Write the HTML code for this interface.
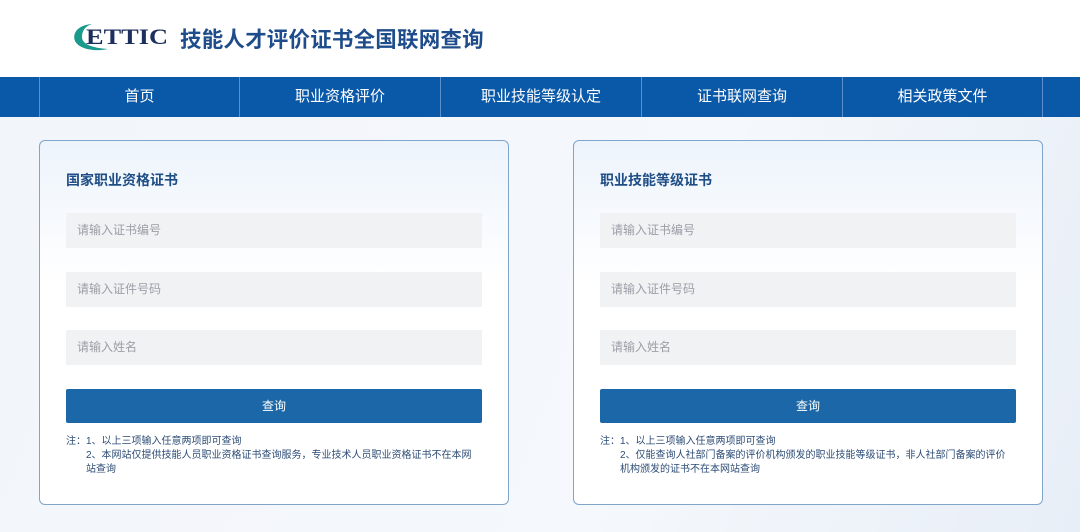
<!DOCTYPE html>
<html><head><meta charset="utf-8"><style>
*{margin:0;padding:0;box-sizing:border-box}
body{width:1080px;height:532px;overflow:hidden;background:#fff;font-family:"Liberation Sans","Noto Sans CJK SC",sans-serif;position:relative}
.hdr{height:77px;position:relative}
.logo{position:absolute;left:72px;top:20px}
.site{position:absolute;left:180px;top:23px;font-size:21.5px;font-weight:bold;color:#1f4d8c;letter-spacing:0.2px}
.nav{position:absolute;top:77px;left:0;width:1080px;height:40px;background:#0a58a8}
.nav div{position:absolute;top:0;height:40px;line-height:40px;text-align:center;color:#fff;font-size:15px;border-left:1px solid #5b8fcb}
.main{position:absolute;top:117px;left:0;width:1080px;height:415px;background:linear-gradient(110deg,#f2f5fa 0%,#f5f8fc 60%,#e8eef7 100%)}
.card{position:absolute;top:140px;width:470px;height:365px;border:1px solid #7fa5ca;border-radius:6px;background:linear-gradient(180deg,#edf4fc 0%,#fff 40%,#fff 100%)}
.card h3{position:absolute;left:26px;top:29px;font-size:14px;color:#1f4d85;font-weight:bold}
.inp{position:absolute;left:26px;width:416px;height:35px;background:#f1f2f4;color:#9a9ea6;font-size:12px;line-height:35px;padding-left:11px}
.btn{position:absolute;left:26px;top:248px;width:416px;height:34px;background:#1b67a7;border-radius:2px;color:#fff;font-size:12px;text-align:center;line-height:34px}
.note{position:absolute;left:26px;top:294px;font-size:10px;line-height:14px;color:#2d4c76;width:412px}
.note p{padding-left:20px}
</style></head><body>
<div class="hdr">
<svg class="logo" width="100" height="36" viewBox="0 0 100 36">
<path d="M20 4 C6 5 0 13 3 21 C7 29 22 32 36 29 C20 28 10 24 10 17 C10 10 14 6 20 4Z" fill="#1a9a8c"/>
<text x="14" y="24" font-family="Liberation Serif" font-weight="bold" font-size="22" fill="#1c2f5e" textLength="82" lengthAdjust="spacingAndGlyphs">ETTIC</text>
</svg>
<div class="site">技能人才评价证书全国联网查询</div>
</div>
<div class="nav">
<div style="left:39px;width:200px">首页</div>
<div style="left:239px;width:201px">职业资格评价</div>
<div style="left:440px;width:201px">职业技能等级认定</div>
<div style="left:641px;width:201px">证书联网查询</div>
<div style="left:842px;width:200px">相关政策文件</div>
<div style="left:1042px;width:38px"></div>
</div>
<div class="main"></div>
<div class="card" style="left:39px">
<h3>国家职业资格证书</h3>
<div class="inp" style="top:72px">请输入证书编号</div>
<div class="inp" style="top:131px">请输入证件号码</div>
<div class="inp" style="top:189px">请输入姓名</div>
<div class="btn">查询</div>
<div class="note">注：1、以上三项输入任意两项即可查询<p>2、本网站仅提供技能人员职业资格证书查询服务，专业技术人员职业资格证书不在本网<br>站查询</p></div>
</div>
<div class="card" style="left:573px">
<h3>职业技能等级证书</h3>
<div class="inp" style="top:72px">请输入证书编号</div>
<div class="inp" style="top:131px">请输入证件号码</div>
<div class="inp" style="top:189px">请输入姓名</div>
<div class="btn">查询</div>
<div class="note">注：1、以上三项输入任意两项即可查询<p>2、仅能查询人社部门备案的评价机构颁发的职业技能等级证书，非人社部门备案的评价<br>机构颁发的证书不在本网站查询</p></div>
</div>
</body></html>
